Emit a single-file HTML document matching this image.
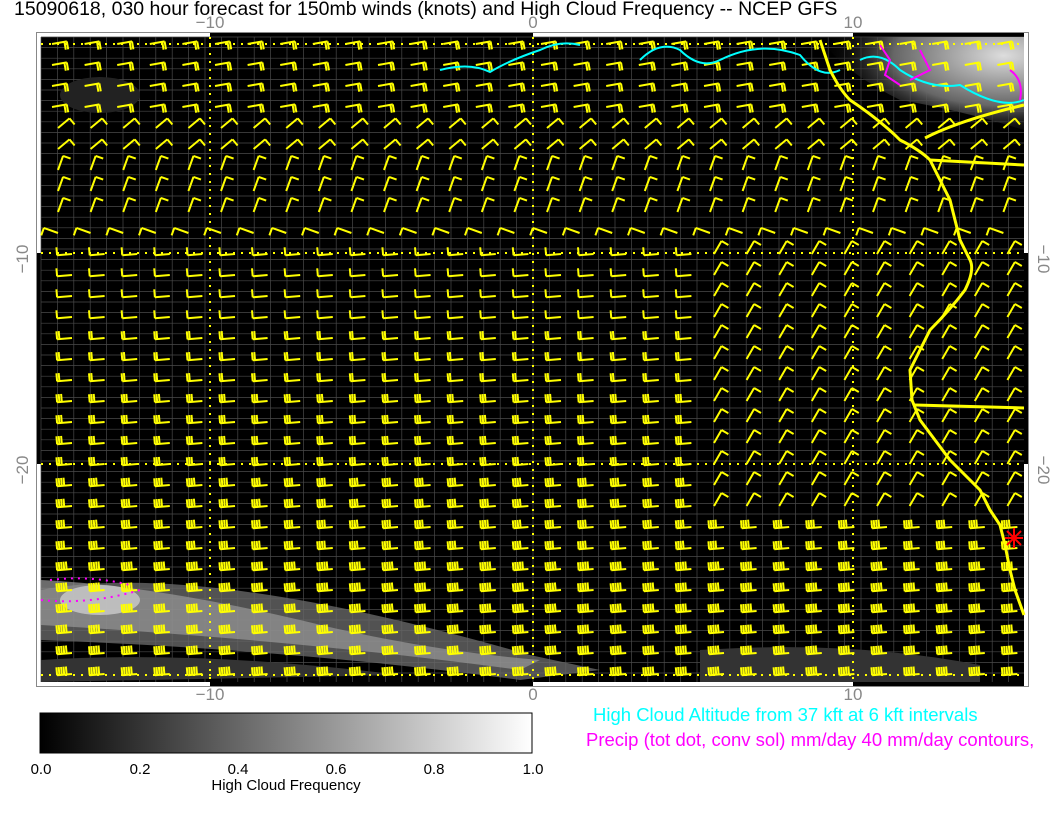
<!DOCTYPE html>
<html><head><meta charset="utf-8"><style>
html,body{margin:0;padding:0;background:#fff;width:1056px;height:816px;overflow:hidden;font-family:"Liberation Sans",sans-serif}
svg{position:absolute;left:0;top:0}
</style></head><body>
<svg id="s" width="1056" height="816" xmlns="http://www.w3.org/2000/svg" font-family="Liberation Sans, sans-serif">
<defs>
<linearGradient id="cb" x1="0" x2="1" y1="0" y2="0"><stop offset="0" stop-color="#000"/><stop offset="1" stop-color="#fff"/></linearGradient>
<radialGradient id="cl2" cx="0.9" cy="0.2" r="0.9"><stop offset="0" stop-color="#ddd"/><stop offset="0.6" stop-color="#666"/><stop offset="1" stop-color="#000" stop-opacity="0"/></radialGradient>
</defs>
<text x="14" y="15" font-size="19.5" fill="#000">15090618, 030 hour forecast for 150mb winds (knots) and High Cloud Frequency -- NCEP GFS</text>
<text x="210" y="28" font-size="17" fill="#888" text-anchor="middle">−10</text>
<text x="533" y="28" font-size="17" fill="#888" text-anchor="middle">0</text>
<text x="853" y="28" font-size="17" fill="#888" text-anchor="middle">10</text>
<rect x="37" y="33" width="991" height="653" fill="#000"/>
<rect x="37" y="33" width="173" height="4" fill="#fff"/><rect x="533" y="33" width="320" height="4" fill="#fff"/>
<rect x="37" y="682" width="173" height="4" fill="#fff"/><rect x="533" y="682" width="320" height="4" fill="#fff"/>
<rect x="37" y="33" width="4" height="220" fill="#fff"/><rect x="37" y="464" width="4" height="222" fill="#fff"/>
<rect x="1024" y="33" width="4" height="220" fill="#fff"/><rect x="1024" y="464" width="4" height="222" fill="#fff"/>
<rect x="36.5" y="32.5" width="992" height="654" fill="none" stroke="#888" stroke-width="1"/>
<g id="grid" stroke="#4a4a4a" stroke-width="0.7"></g>
<path d="M41 590 Q200 560 530 655 L600 670 L520 680 Q300 650 41 640 Z" fill="#666" opacity="0.8"/>
<path d="M41 580 Q150 585 300 620 Q420 650 540 660 L520 670 Q300 640 41 625 Z" fill="#999" opacity="0.7"/>
<ellipse cx="100" cy="600" rx="40" ry="15" fill="#ccc" opacity="0.8"/>
<path d="M41 660 Q200 650 400 675 L41 682Z" fill="#333"/>
<path d="M700 650 Q850 640 980 665 L980 682 L700 682Z" fill="#333"/>
<path d="M820 37 L1024 37 L1024 130 Q960 110 900 100 Q840 70 820 37Z" fill="url(#cl2)"/>
<ellipse cx="100" cy="95" rx="40" ry="18" fill="#222"/>
<g id="b" stroke="#ff0" stroke-width="2" fill="none"></g>
<g stroke="#ff0" stroke-width="2" stroke-dasharray="2,6" fill="none">
<line x1="41" y1="44" x2="1024" y2="44"/><line x1="41" y1="253" x2="1024" y2="253"/><line x1="41" y1="464" x2="1024" y2="464"/><line x1="41" y1="675" x2="1024" y2="675"/>
<line x1="210" y1="37" x2="210" y2="682"/><line x1="533" y1="37" x2="533" y2="682"/><line x1="853" y1="37" x2="853" y2="682"/>
</g>
<g stroke="#0ff" stroke-width="2" fill="none">
<path d="M440 70 Q470 62 490 72 Q510 60 540 50 Q560 40 580 45"/>
<path d="M640 60 Q660 40 680 50 Q700 70 720 60 Q760 40 800 55 Q820 80 840 70"/>
<path d="M860 60 Q880 50 900 70 Q930 90 960 85 Q1000 110 1024 100"/>
</g>
<g stroke="#f0f" stroke-width="2" fill="none">
<path d="M880 45 L890 60 L885 75 L900 85 M920 50 L930 70 L910 80 M1010 70 Q1024 80 1020 100"/>
</g>
<path d="M50 580 Q90 575 130 585 M41 600 Q90 605 140 590" stroke="#f0f" stroke-width="2" stroke-dasharray="2,5" fill="none"/>
<g stroke="#ff0" stroke-width="3" fill="none">
<path d="M820 40 L830 70 Q840 90 850 100 Q880 120 900 140 Q920 150 930 160 L950 200 L960 240 L970 260 Q975 270 965 290 Q950 310 930 330 L920 350 L910 370 L912 400 L920 420 Q935 440 950 460 L980 490 L990 510 L1000 525 L1005 545 L1010 570 L1015 590 L1024 615"/>
<path d="M930 160 L1024 165 M925 138 Q960 120 1024 105 M915 405 L1024 408"/>
</g>
<g stroke="#f00" stroke-width="2"><line x1="1005" y1="538" x2="1023" y2="538"/><line x1="1014" y1="528" x2="1014" y2="548"/><line x1="1007" y1="531" x2="1021" y2="545"/><line x1="1021" y1="531" x2="1007" y2="545"/></g>
<text x="22" y="253" font-size="17" fill="#888" transform="rotate(-90 28 253)" text-anchor="middle">−10</text>
<text x="22" y="464" font-size="17" fill="#888" transform="rotate(-90 28 464)" text-anchor="middle">−20</text>
<text x="1044" y="253" font-size="17" fill="#888" transform="rotate(90 1038 253)" text-anchor="middle">−10</text>
<text x="1044" y="464" font-size="17" fill="#888" transform="rotate(90 1038 464)" text-anchor="middle">−20</text>
<text x="210" y="700" font-size="17" fill="#888" text-anchor="middle">−10</text>
<text x="533" y="700" font-size="17" fill="#888" text-anchor="middle">0</text>
<text x="853" y="700" font-size="17" fill="#888" text-anchor="middle">10</text>
<rect x="40" y="713" width="492" height="40" fill="url(#cb)" stroke="#000"/>
<g font-size="15" fill="#000" text-anchor="middle"><text x="41" y="774">0.0</text><text x="140" y="774">0.2</text><text x="238" y="774">0.4</text><text x="336" y="774">0.6</text><text x="434" y="774">0.8</text><text x="533" y="774">1.0</text></g>
<text x="286" y="790" font-size="15" fill="#000" text-anchor="middle">High Cloud Frequency</text>
<text x="593" y="721" font-size="18.5" fill="#0ff">High Cloud Altitude from 37 kft at 6 kft intervals</text>
<text x="586" y="746" font-size="18.5" fill="#f0f">Precip (tot dot, conv sol) mm/day 40 mm/day contours,</text>
</svg>
<script>
var g=document.getElementById('grid'),s='';
for(var x=41;x<1024;x+=16.4)s+='<line x1="'+x+'" y1="37" x2="'+x+'" y2="682"/>';
for(var y=37;y<682;y+=10.6)s+='<line x1="41" y1="'+y+'" x2="1024" y2="'+y+'"/>';
g.innerHTML=s;
var b=document.getElementById('b'),p='';
for(var r=0;r<31;r++){var y=44+r*21;for(var c=0;c<30;c++){var x=58+c*32.6;
var th,n,fs=1;
if(y<110){th=-10;n=2;x-=6;}else if(y<170){th=-40;n=1;}else if(y<215){th=-70;n=1;}else if(y<245){th=200;n=1;}
else if(x>690&&y<520){th=-60;n=1;x+=4;}
else{th=175;n=Math.min(5,1+Math.floor((y-240)/80));x+=14;if(y>570&&x<560)n=5;fs=-1;}
var a=th*Math.PI/180,L=15,tx=x+L*Math.cos(a),ty=y+L*Math.sin(a);
var d='M'+x.toFixed(1)+' '+y+'L'+tx.toFixed(1)+' '+ty.toFixed(1);
var fa=a+fs*Math.PI/2*(th>170?-1:1);
for(var k=0;k<n;k++){var bx=tx-k*2.4*Math.cos(a),by=ty-k*2.4*Math.sin(a);
d+='M'+bx.toFixed(1)+' '+by.toFixed(1)+'l'+(8*Math.cos(fa)).toFixed(1)+' '+(8*Math.sin(fa)).toFixed(1);}
p+='<path d="'+d+'"/>';}}
b.innerHTML=p;
</script>
</body></html>
